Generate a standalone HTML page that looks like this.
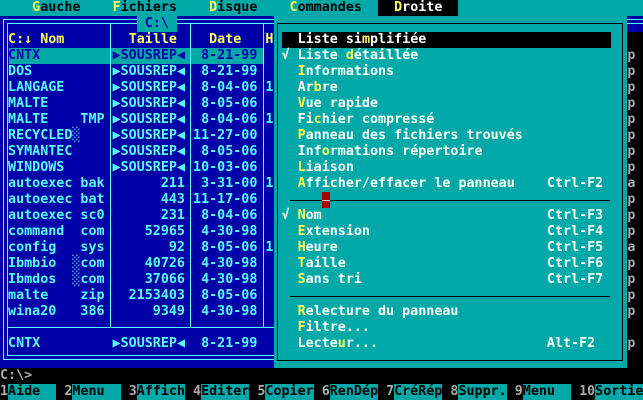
<!DOCTYPE html>
<html><head><meta charset="utf-8"><style>
*{box-sizing:border-box}
body{margin:0;width:643px;height:400px;background:#000;position:relative;overflow:hidden;font-family:"DejaVu Sans Mono","Liberation Mono",monospace;font-size:13.36px;line-height:16px;font-weight:bold}
.bx{position:absolute}
.r{position:absolute;left:0;width:643px;height:16px}
.r>span{position:absolute;white-space:pre;top:0;height:16px}
.y{color:#ffff55}.w{color:#fff}.c{color:#55ffff}.k{color:#000}.b{color:#0000a8}.g{color:#aaa}
.n{left:1ch}.x{left:10ch}.t{left:14ch;width:9ch;text-align:right}.d{left:24ch;width:8ch;text-align:right}.h{left:33ch}.hid{left:9ch}
.ck{left:35ch}.m{left:37ch}.s{left:68ch}
.p{left:78ch}
.fn{color:#aaa}.fl{background:#00a8a8;color:#000;width:6ch}
</style></head><body>
<!-- backgrounds -->
<div class="bx" style="left:0;top:0;width:643px;height:16px;background:#00a8a8"></div>
<div class="bx" style="left:0;top:16px;width:643px;height:352px;background:#0000a8"></div>
<div class="bx" style="left:274px;top:16px;width:353px;height:352px;background:#00a8a8"></div>
<div class="bx" style="left:627px;top:32px;width:16px;height:336px;background:#000"></div>
<!-- left panel lines -->
<div class="bx" style="left:3px;top:19px;width:271px;height:1px;background:#55ffff"></div>
<div class="bx" style="left:7px;top:23px;width:267px;height:1px;background:#55ffff"></div>
<div class="bx" style="left:3px;top:19px;width:1px;height:341px;background:#55ffff"></div>
<div class="bx" style="left:7px;top:23px;width:1px;height:333px;background:#55ffff"></div>
<div class="bx" style="left:3px;top:359px;width:271px;height:1px;background:#55ffff"></div>
<div class="bx" style="left:7px;top:355px;width:267px;height:1px;background:#55ffff"></div>
<div class="bx" style="left:7px;top:327px;width:267px;height:1px;background:#55ffff"></div>
<div class="bx" style="left:9px;top:48px;width:255px;height:16px;background:#00a8a8"></div>
<div class="bx" style="left:110px;top:23px;width:1px;height:304px;background:#55ffff"></div>
<div class="bx" style="left:190px;top:23px;width:1px;height:304px;background:#55ffff"></div>
<div class="bx" style="left:263px;top:23px;width:1px;height:304px;background:#55ffff"></div>
<!-- right panel top -->
<div class="bx" style="left:627px;top:19px;width:16px;height:1px;background:#55ffff"></div>
<div class="bx" style="left:627px;top:23px;width:16px;height:1px;background:#55ffff"></div>
<!-- dropdown -->
<div class="bx" style="left:277px;top:23px;width:346px;height:338px;border:1px solid #000"></div>
<div class="bx" style="left:282px;top:32px;width:329px;height:16px;background:#000"></div>
<div class="bx" style="left:290px;top:200px;width:320px;height:1px;background:#000"></div>
<div class="bx" style="left:290px;top:296px;width:320px;height:1px;background:#000"></div>
<div class="bx" style="left:322px;top:192px;width:8px;height:16px;background:#a80000"></div>
<div class="bx" style="left:322px;top:200px;width:8px;height:1px;background:#ccc"></div>

<!-- row 0 menu -->
<div class="r k" style="top:0"><span style="left:4ch"><b class="y" style="color:#ffff55">G</b>auche</span><span style="left:14ch"><b style="color:#ffff55">F</b>ichiers</span><span style="left:26ch"><b style="color:#ffff55">D</b>isque</span><span style="left:36ch"><b style="color:#ffff55">C</b>ommandes</span><span class="w" style="left:47ch;background:#000">  <b style="color:#ffff55">D</b>roite  </span></div>
<div class="r b" style="top:16px"><span style="left:17ch;background:#00a8a8"> C:\ </span></div>
<div class="r y" style="top:32px"><span class="n">C:↓ Nom</span><span style="left:16ch">Taille</span><span style="left:26ch">Date</span><span class="h">H</span></div>

<div class="r b" style="top:48px"><span class="n">CNTX</span><span class="t">▶SOUSREP◀</span><span class="d">8-21-99</span></div>
<div class="r c" style="top:64px"><span class="n">DOS</span><span class="t">▶SOUSREP◀</span><span class="d">8-21-99</span></div>
<div class="r c" style="top:80px"><span class="n">LANGAGE</span><span class="t">▶SOUSREP◀</span><span class="d">8-04-06</span><span class="h">1</span></div>
<div class="r c" style="top:96px"><span class="n">MALTE</span><span class="t">▶SOUSREP◀</span><span class="d">8-05-06</span></div>
<div class="r c" style="top:112px"><span class="n">MALTE</span><span class="x">TMP</span><span class="t">▶SOUSREP◀</span><span class="d">8-04-06</span><span class="h">1</span></div>
<div class="r c" style="top:128px"><span class="n">RECYCLED</span><span class="hid">░</span><span class="t">▶SOUSREP◀</span><span class="d">11-27-00</span></div>
<div class="r c" style="top:144px"><span class="n">SYMANTEC</span><span class="t">▶SOUSREP◀</span><span class="d">8-05-06</span></div>
<div class="r c" style="top:160px"><span class="n">WINDOWS</span><span class="t">▶SOUSREP◀</span><span class="d">10-03-06</span></div>
<div class="r c" style="top:176px"><span class="n">autoexec</span><span class="x">bak</span><span class="t">211</span><span class="d">3-31-00</span><span class="h">1</span></div>
<div class="r c" style="top:192px"><span class="n">autoexec</span><span class="x">bat</span><span class="t">443</span><span class="d">11-17-06</span></div>
<div class="r c" style="top:208px"><span class="n">autoexec</span><span class="x">sc0</span><span class="t">231</span><span class="d">8-04-06</span></div>
<div class="r c" style="top:224px"><span class="n">command</span><span class="x">com</span><span class="t">52965</span><span class="d">4-30-98</span></div>
<div class="r c" style="top:240px"><span class="n">config</span><span class="x">sys</span><span class="t">92</span><span class="d">8-05-06</span><span class="h">1</span></div>
<div class="r c" style="top:256px"><span class="n">Ibmbio</span><span class="hid">░</span><span class="x">com</span><span class="t">40726</span><span class="d">4-30-98</span></div>
<div class="r c" style="top:272px"><span class="n">Ibmdos</span><span class="hid">░</span><span class="x">com</span><span class="t">37066</span><span class="d">4-30-98</span></div>
<div class="r c" style="top:288px"><span class="n">malte</span><span class="x">zip</span><span class="t">2153403</span><span class="d">8-05-06</span></div>
<div class="r c" style="top:304px"><span class="n">wina20</span><span class="x">386</span><span class="t">9349</span><span class="d">4-30-98</span></div>
<div class="r c" style="top:336px"><span class="n">CNTX</span><span class="t">▶SOUSREP◀</span><span class="d">8-21-99</span></div>

<!-- dropdown items -->
<div class="r w" style="top:32px"><span class="m">Liste si<b style="color:#ffff55">m</b>plifiée</span></div>
<div class="r w" style="top:48px"><span class="ck">√</span><span class="m">Liste <b style="color:#ffff55">d</b>étaillée</span></div>
<div class="r w" style="top:64px"><span class="m"><b style="color:#ffff55">I</b>nformations</span></div>
<div class="r w" style="top:80px"><span class="m">Ar<b style="color:#ffff55">b</b>re</span></div>
<div class="r w" style="top:96px"><span class="m"><b style="color:#ffff55">V</b>ue rapide</span></div>
<div class="r w" style="top:112px"><span class="m">Fi<b style="color:#ffff55">c</b>hier compressé</span></div>
<div class="r w" style="top:128px"><span class="m"><b style="color:#ffff55">P</b>anneau des fichiers trouvés</span></div>
<div class="r w" style="top:144px"><span class="m">Inf<b style="color:#ffff55">o</b>rmations répertoire</span></div>
<div class="r w" style="top:160px"><span class="m"><b style="color:#ffff55">L</b>iaison</span></div>
<div class="r w" style="top:176px"><span class="m"><b style="color:#ffff55">A</b>fficher/effacer le panneau</span><span class="s">Ctrl-F2</span></div>
<div class="r w" style="top:208px"><span class="ck">√</span><span class="m"><b style="color:#ffff55">N</b>om</span><span class="s">Ctrl-F3</span></div>
<div class="r w" style="top:224px"><span class="m"><b style="color:#ffff55">E</b>xtension</span><span class="s">Ctrl-F4</span></div>
<div class="r w" style="top:240px"><span class="m"><b style="color:#ffff55">H</b>eure</span><span class="s">Ctrl-F5</span></div>
<div class="r w" style="top:256px"><span class="m"><b style="color:#ffff55">T</b>aille</span><span class="s">Ctrl-F6</span></div>
<div class="r w" style="top:272px"><span class="m"><b style="color:#ffff55">S</b>ans tri</span><span class="s">Ctrl-F7</span></div>
<div class="r w" style="top:304px"><span class="m"><b style="color:#ffff55">R</b>electure du panneau</span></div>
<div class="r w" style="top:320px"><span class="m"><b style="color:#ffff55">F</b>iltre...</span></div>
<div class="r w" style="top:336px"><span class="m">Lecte<b style="color:#ffff55">u</b>r...</span><span class="s">Alt-F2</span></div>

<!-- shadow chars -->
<div class="r g" style="top:48px"><span class="p">p</span></div>
<div class="r g" style="top:64px"><span class="p">p</span></div>
<div class="r g" style="top:80px"><span class="p">p</span></div>
<div class="r g" style="top:96px"><span class="p">p</span></div>
<div class="r g" style="top:112px"><span class="p">p</span></div>
<div class="r g" style="top:128px"><span class="p">p</span></div>
<div class="r g" style="top:144px"><span class="p">p</span></div>
<div class="r g" style="top:160px"><span class="p">p</span></div>
<div class="r g" style="top:176px"><span class="p">a</span></div>
<div class="r g" style="top:192px"><span class="p">p</span></div>
<div class="r g" style="top:208px"><span class="p">p</span></div>
<div class="r g" style="top:224px"><span class="p">p</span></div>
<div class="r g" style="top:240px"><span class="p">a</span></div>
<div class="r g" style="top:256px"><span class="p">p</span></div>
<div class="r g" style="top:272px"><span class="p">p</span></div>
<div class="r g" style="top:288px"><span class="p">p</span></div>
<div class="r g" style="top:304px"><span class="p">p</span></div>
<div class="r g" style="top:336px"><span class="p">p</span></div>

<!-- command line -->
<div class="r g" style="top:368px"><span style="left:0">C:\&gt;</span></div>
<!-- function keys -->
<div class="r" style="top:384px">
<span class="fn" style="left:0">1</span><span class="fl" style="left:1ch">Aide</span>
<span class="fn" style="left:8ch">2</span><span class="fl" style="left:9ch">Menu</span>
<span class="fn" style="left:16ch">3</span><span class="fl" style="left:17ch">Affich</span>
<span class="fn" style="left:24ch">4</span><span class="fl" style="left:25ch">Editer</span>
<span class="fn" style="left:32ch">5</span><span class="fl" style="left:33ch">Copier</span>
<span class="fn" style="left:40ch">6</span><span class="fl" style="left:41ch">RenDép</span>
<span class="fn" style="left:48ch">7</span><span class="fl" style="left:49ch">CréRép</span>
<span class="fn" style="left:56ch">8</span><span class="fl" style="left:57ch">Suppr.</span>
<span class="fn" style="left:64ch">9</span><span class="fl" style="left:65ch">Menu</span>
<span class="fn" style="left:72ch">10</span><span class="fl" style="left:74ch">Sortie</span>
</div>
</body></html>
